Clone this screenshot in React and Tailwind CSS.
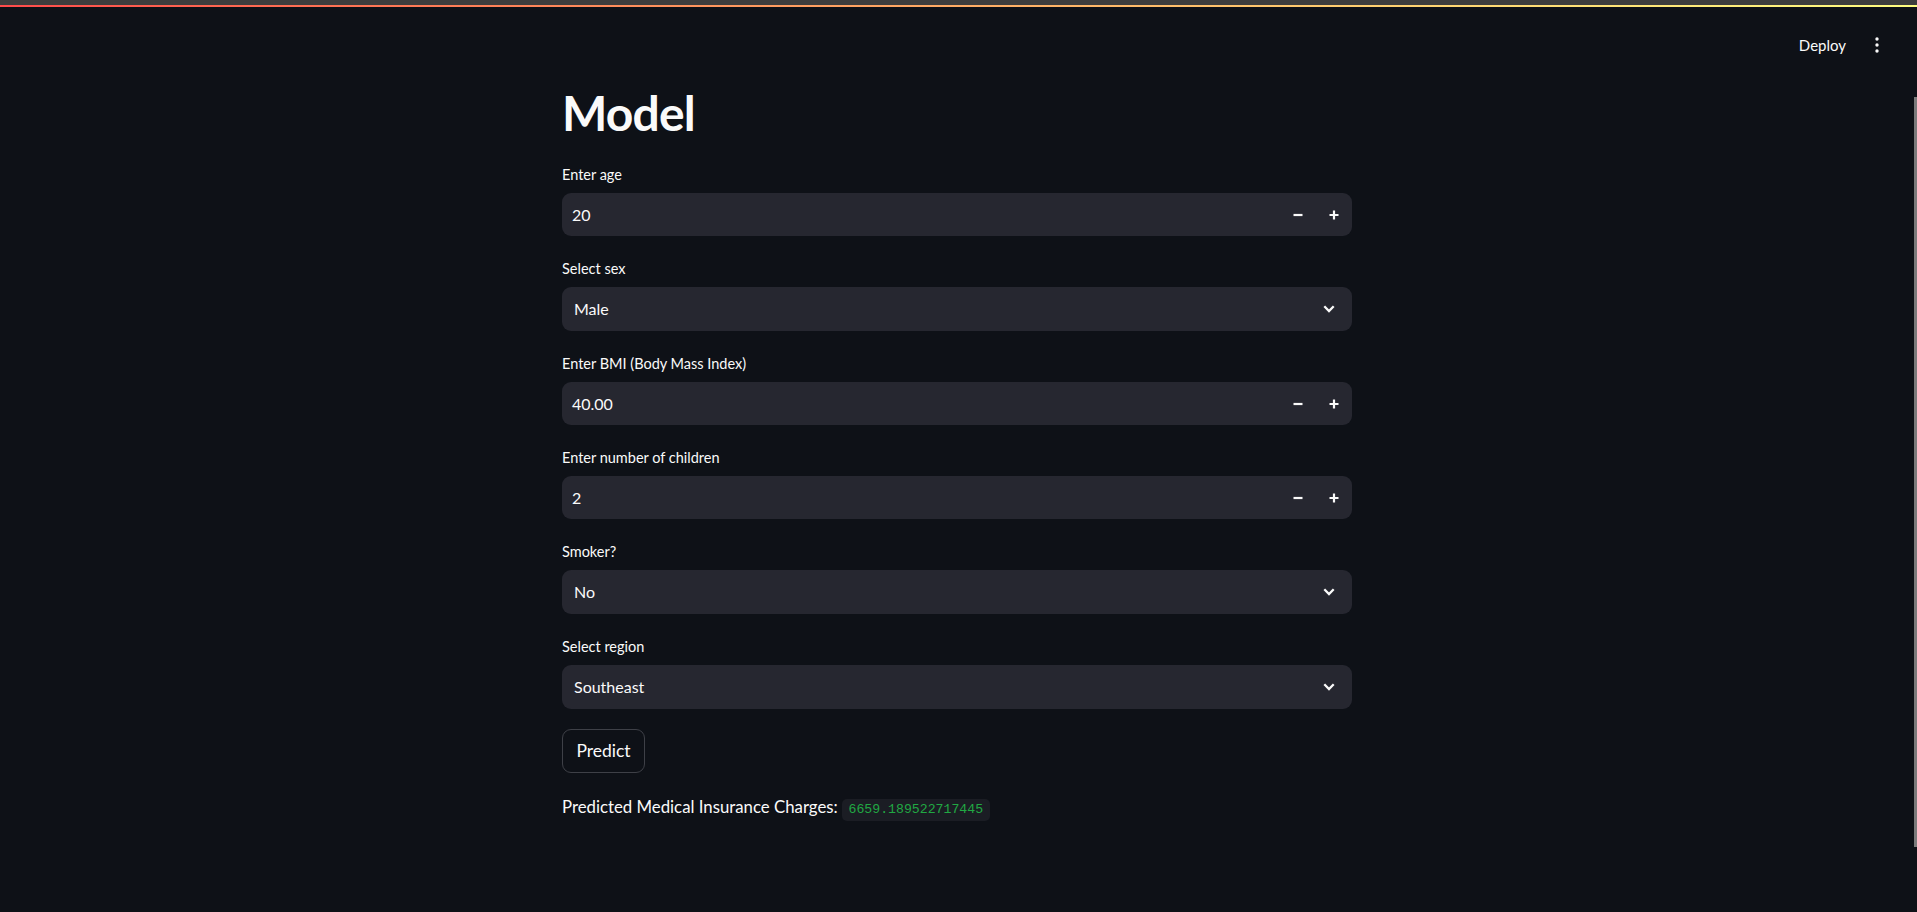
import React from 'react';

const Minus = () => (
  <svg width="10" height="10" viewBox="0 0 10 10" fill="none">
    <path d="M0.5 5h9" stroke="#fafafa" strokeWidth="2.2" />
  </svg>
);

const Plus = () => (
  <svg width="10" height="10" viewBox="0 0 10 10" fill="none">
    <path d="M0.5 5h9M5 0.5v9" stroke="#fafafa" strokeWidth="2.2" />
  </svg>
);

const Chevron = () => (
  <svg width="12" height="8" viewBox="0 0 12 8" fill="none">
    <path d="M1.3 1.3L6 6l4.7-4.7" stroke="#fafafa" strokeWidth="2.3" />
  </svg>
);

const Field = ({ label, children }) => (
  <div className="flex flex-col">
    <label className="h-[26px] mb-[5px] text-[14.5px] leading-[26px] text-[#fafafa]">{label}</label>
    {children}
  </div>
);

const NumberInput = ({ value }) => (
  <div className="flex items-center h-[43px] rounded-[9px] bg-[#262730]">
    <span className="flex-1 pl-[10px] text-[16px] text-[#fafafa]">{value}</span>
    <button className="flex items-center justify-center w-[36px] h-full">
      <Minus />
    </button>
    <button className="flex items-center justify-center w-[36px] h-full">
      <Plus />
    </button>
  </div>
);

const SelectBox = ({ value }) => (
  <div className="flex items-center justify-between h-[44px] rounded-[9px] bg-[#262730] pl-[12px] pr-[17px]">
    <span className="text-[16px] text-[#fafafa]">{value}</span>
    <Chevron />
  </div>
);

const App = () => {
  return (
    <div className="relative h-[912px] overflow-hidden bg-[#0e1117] font-['Lato',sans-serif] text-[#fafafa]">
      {/* top decoration */}
      <div className="h-[5px] bg-[#3d3d3d]" />
      <div className="h-[2px] bg-gradient-to-r from-[#ff4b4b] to-[#fffd80]" />

      {/* header toolbar */}
      <div className="flex h-[76px] items-center justify-end gap-[17px] pr-[26px]">
        <span className="text-[15px] text-[#fafafa]">Deploy</span>
        <div className="flex w-[28px] justify-center">
          <svg width="4" height="16" viewBox="0 0 4 16" fill="#fafafa">
            <circle cx="2" cy="2" r="1.7" />
            <circle cx="2" cy="8" r="1.7" />
            <circle cx="2" cy="14" r="1.7" />
          </svg>
        </div>
      </div>

      {/* main block */}
      <div className="pr-[3px]">
        <div className="mx-auto flex w-[790px] flex-col gap-[20px] pt-[1px]">
          <h1 className="h-[58px] text-[48px] font-bold leading-[58px] tracking-[-0.8px] text-[#fafafa]">Model</h1>
          <Field label="Enter age">
            <NumberInput value="20" />
          </Field>
          <Field label="Select sex">
            <SelectBox value="Male" />
          </Field>
          <Field label="Enter BMI (Body Mass Index)">
            <NumberInput value="40.00" />
          </Field>
          <Field label="Enter number of children">
            <NumberInput value="2" />
          </Field>
          <Field label="Smoker?">
            <SelectBox value="No" />
          </Field>
          <Field label="Select region">
            <SelectBox value="Southeast" />
          </Field>
          <div>
            <button className="h-[44px] w-[83px] rounded-[9px] border border-[#3e4047] text-[17.5px] text-[#fafafa]">
              Predict
            </button>
          </div>
          <p className="text-[16.8px] leading-[28px]">
            Predicted Medical Insurance Charges:{' '}
            <code className="inline-block rounded-[5px] bg-[#1b1d24] px-[6.5px] py-[3px] font-['Liberation_Mono',monospace] text-[13.2px] leading-[16px] text-[#21a843]">
              6659.189522717445
            </code>
          </p>
        </div>
      </div>

      {/* scrollbar thumb */}
      <div className="absolute right-0 top-[97px] h-[750px] w-[3px] bg-[#7b7b7b]" />
    </div>
  );
};

export default App;
